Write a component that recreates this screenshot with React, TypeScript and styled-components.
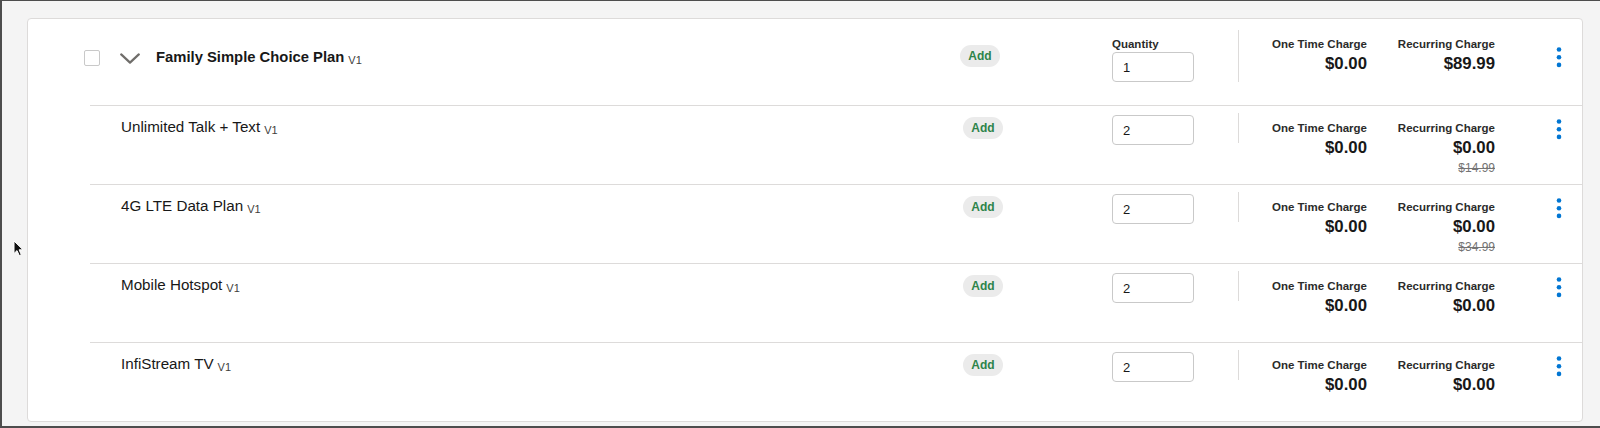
import React from "react";
import styled, { createGlobalStyle, css } from "styled-components";

const GlobalStyle = createGlobalStyle`
  html, body {
    margin: 0;
    padding: 0;
  }

  body {
    font-family: "Liberation Sans", Arial, sans-serif;
    color: #181818;
  }
`;

const Page = styled.div`
  position: relative;
  box-sizing: border-box;
  height: 428px;
  padding: 17px 17px 4px 25px;

  background: #f4f4f4;
  border-top: 1px solid #4d4d4d;
  border-bottom: 2px solid #4d4d4d;
  border-left: 2px solid #4d4d4d;
`;

const Card = styled.section`
  box-sizing: border-box;
  height: 100%;

  background: #fff;
  border: 1px solid #dddbda;
  border-radius: 4px;
`;

const Row = styled.div<{ $lead?: boolean }>`
  display: grid;
  grid-template-columns: 1fr 50px 189px 45px 128px 128px 87px;
  align-items: start;
  box-sizing: border-box;

  ${(p) =>
    p.$lead
      ? css`
          height: 86px;
          padding-top: 11px;
          --pill-top: 15px;
          --pill-shift: 0px;
          --qty-top: 6px;
          --rule-h: 52px;
          --charge-top: 6px;
          --menu-top: 17px;
        `
      : css`
          height: 79px;
          margin-left: 62px;
          padding-top: 7px;
          border-top: 1px solid #dddbda;
          --pill-top: 4px;
          --pill-shift: 6px;
          --qty-top: 2px;
          --rule-h: 30px;
          --charge-top: 7px;
          --menu-top: 6px;
        `}
`;

const LeadCell = styled.div`
  display: flex;
  align-items: center;
  height: 20px;
  margin-top: 18px;
  padding-left: 56px;
`;

const Checkbox = styled.span`
  box-sizing: border-box;
  width: 16px;
  height: 16px;

  background: #fff;
  border: 1px solid #c9c9c9;
  border-radius: 2px;
`;

const Chevron = styled.svg`
  margin-left: 20px;
  flex: none;
`;

const Title = styled.span`
  margin-left: 16px;

  font-size: 14.8px;
  font-weight: 700;
  line-height: 20px;
  white-space: nowrap;
`;

const NameCell = styled.div`
  margin-top: 4px;
  padding-left: 31px;

  font-size: 15.2px;
  line-height: 20px;
  white-space: nowrap;
`;

const Version = styled.span`
  margin-left: 4px;

  color: #3e3e3c;
  font-size: 11px;
  font-weight: 400;
  vertical-align: -2px;
`;

const Pill = styled.button`
  justify-self: center;
  height: 22px;
  margin-top: var(--pill-top);
  margin-left: var(--pill-shift);
  padding: 0 8px;

  background: #ebebeb;
  border: 0;
  border-radius: 11px;

  color: #2e844a;
  font-family: inherit;
  font-size: 12px;
  font-weight: 700;
  line-height: 22px;
`;

const QtyCell = styled.div`
  justify-self: end;
  width: 82px;
  margin-top: var(--qty-top);
`;

const QtyLabel = styled.div`
  font-size: 11.5px;
  font-weight: 700;
  line-height: 16px;
  color: #2b2b2b;
`;

const QtyInput = styled.input`
  display: block;
  box-sizing: border-box;
  width: 82px;
  height: 30px;
  padding: 0 10px;

  background: #fff;
  border: 1px solid #c9c9c9;
  border-radius: 4px;

  color: #181818;
  font-family: inherit;
  font-size: 13px;
`;

const Rule = styled.div`
  justify-self: end;
  width: 1px;
  height: var(--rule-h);

  background: #dddbda;
`;

const Charge = styled.div`
  display: flex;
  flex-direction: column;
  align-items: flex-end;
  margin-top: var(--charge-top);
`;

const ChargeLabel = styled.div`
  font-size: 11.5px;
  font-weight: 700;
  line-height: 16px;
  color: #2b2b2b;
  white-space: nowrap;
`;

const Amount = styled.div`
  margin-top: 2px;

  font-size: 16.8px;
  font-weight: 700;
  line-height: 20px;
`;

const WasAmount = styled.div`
  margin-top: 2px;

  color: #747474;
  font-size: 12px;
  line-height: 16px;
  text-decoration: line-through;
`;

const Menu = styled.button`
  display: flex;
  justify-content: center;
  justify-self: end;
  width: 20px;
  margin-top: var(--menu-top);
  margin-right: 13px;
  padding: 0;

  background: none;
  border: 0;
`;

const Cursor = styled.svg`
  position: absolute;
  top: 239px;
  left: 11px;
`;

type Item = { name: string; qty: string; was?: string };

const ITEMS: Item[] = [
  { name: "Unlimited Talk + Text", qty: "2", was: "$14.99" },
  { name: "4G LTE Data Plan", qty: "2", was: "$34.99" },
  { name: "Mobile Hotspot", qty: "2" },
  { name: "InfiStream TV", qty: "2" },
];

function Dots() {
  return (
    <svg width="6" height="21" viewBox="0 0 6 21">
      <circle cx="3" cy="2.5" r="2.3" fill="#0176d3" />
      <circle cx="3" cy="10.2" r="2.3" fill="#0176d3" />
      <circle cx="3" cy="17.9" r="2.3" fill="#0176d3" />
    </svg>
  );
}

function Charges({ recurring, was }: { recurring: string; was?: string }) {
  return (
    <>
      <Charge>
        <ChargeLabel>One Time Charge</ChargeLabel>
        <Amount>$0.00</Amount>
      </Charge>
      <Charge>
        <ChargeLabel>Recurring Charge</ChargeLabel>
        <Amount>{recurring}</Amount>
        {was && <WasAmount>{was}</WasAmount>}
      </Charge>
    </>
  );
}

export default function App() {
  return (
    <>
      <GlobalStyle />
      <Page>
        <Card>
          <Row $lead>
            <LeadCell>
              <Checkbox />
              <Chevron width="20" height="11" viewBox="0 0 20 11">
                <path d="M1.2 1.4 L10 9.6 L18.8 1.4" fill="none" stroke="#706e6b" strokeWidth="2.2" strokeLinecap="round" strokeLinejoin="round" />
              </Chevron>
              <Title>
                Family Simple Choice Plan<Version>V1</Version>
              </Title>
            </LeadCell>
            <Pill>Add</Pill>
            <QtyCell>
              <QtyLabel>Quantity</QtyLabel>
              <QtyInput defaultValue="1" />
            </QtyCell>
            <Rule />
            <Charges recurring="$89.99" />
            <Menu>
              <Dots />
            </Menu>
          </Row>
          {ITEMS.map((item) => (
            <Row key={item.name}>
              <NameCell>
                {item.name}
                <Version>V1</Version>
              </NameCell>
              <Pill>Add</Pill>
              <QtyCell>
                <QtyInput defaultValue={item.qty} />
              </QtyCell>
              <Rule />
              <Charges recurring="$0.00" was={item.was} />
              <Menu>
                <Dots />
              </Menu>
            </Row>
          ))}
        </Card>
        <Cursor width="11" height="17" viewBox="0 0 11 17">
          <path d="M1 1 L1 13.5 L4 10.6 L6.3 15.6 L8.3 14.7 L6.1 9.8 L10 9.8 Z" fill="#111" stroke="#fff" strokeWidth="1" strokeLinejoin="round" />
        </Cursor>
      </Page>
    </>
  );
}
